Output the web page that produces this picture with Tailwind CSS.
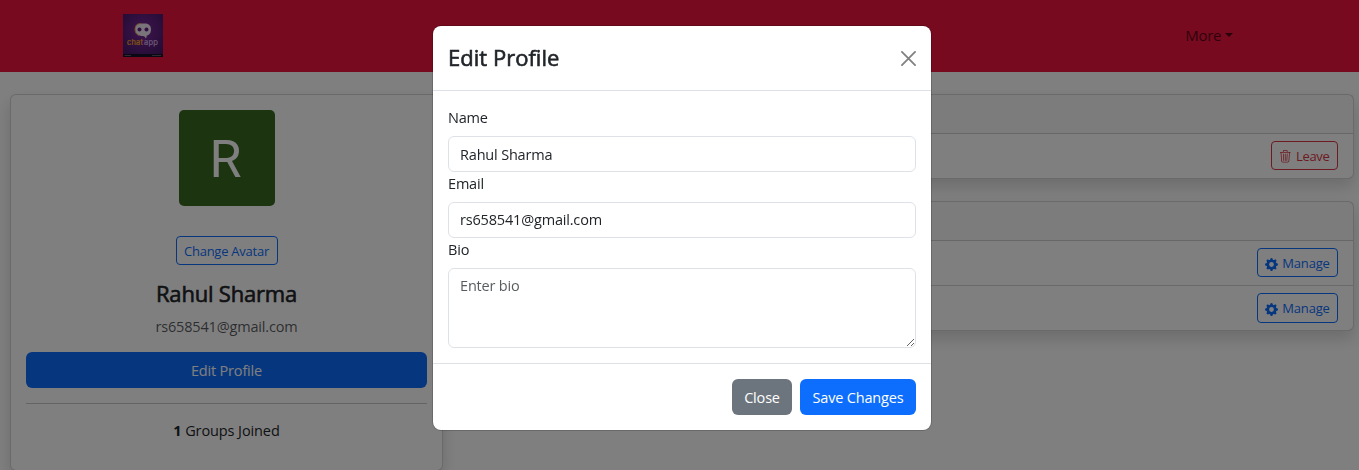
<!DOCTYPE html>
<html lang="en">
<head>
<meta charset="utf-8">
<title>Edit Profile</title>
<script src="https://cdn.jsdelivr.net/npm/@tailwindcss/browser@4"></script>
</head>
<body class="h-[470px] overflow-hidden bg-white font-['Segoe_UI','Open_Sans',sans-serif] text-[14.5px] leading-[22.5px] tracking-[-0.18px] text-[#212529]">
<nav class="flex h-[72px] items-center justify-between bg-[#ee143e] pr-[126px] pl-[123px]">
  <svg class="mt-[-2px] h-[43px] w-[40px]" viewBox="0 0 40 43">
    <defs><radialGradient id="g" cx=".5" cy=".4" r=".7"><stop offset="0" stop-color="#7c2a9c"/><stop offset="1" stop-color="#451766"/></radialGradient></defs>
    <rect width="40" height="43" fill="url(#g)"/>
    <rect y="40" width="40" height="3" fill="#17102c"/>
    <path d="M1.5 41.5H8M29 41.5H38" stroke="#777" stroke-width=".7"/>
    <path d="M18 9.500h4c4 0 6 2.500 6 6s-2 6-4.500 6c.3 1 .2 2-.8 3-.4-1.500-1.200-2.500-2.700-2.500-4.500 0-8-2-8-6.500s2-6 6-6z" fill="#f2e6f5"/>
    <path d="M18 9.500c-4 0-6 2.500-6 6 0 3 1.500 5 4 6" fill="none" stroke="#e49c48"/>
    <circle cx="16.500" cy="15.500" r="2" fill="#641d83"/><circle cx="23.500" cy="15.500" r="2" fill="#641d83"/>
    <text x="4" y="30.500" font-family="Inter, sans-serif" font-size="7.500" letter-spacing="0.2" fill="#ffae20" stroke="#ffae20" stroke-width=".2">chat</text>
    <text x="21" y="30.500" font-family="Inter, sans-serif" font-size="7.500" letter-spacing="0.2" fill="#d8b4ea" stroke="#d8b4ea" stroke-width=".2">app</text>
  </svg>
  <div class="mt-[-2px] flex items-center gap-[4px] text-black/65"><span class="text-[15px] tracking-[-0.35px]">More</span><span class="border-x-[4px] border-t-[4px] border-x-transparent border-t-current"></span></div>
</nav>
<main class="flex items-start gap-[12px] pt-[22px] pl-[10px]">
  <section class="flex h-[377px] w-[433px] shrink-0 flex-col items-center rounded-[6px] border border-black/17 bg-white px-[15px] pt-[15px] shadow-[0_8px_16px_rgba(0,0,0,0.15)]">
    <div class="flex size-[96px] items-center justify-center rounded-[5px] bg-[#386a20] pt-[5px] pr-[2px] font-[Roboto] text-[52px] tracking-normal text-white">R</div>
    <div class="mt-[30px] flex h-[29px] w-[102px] items-center justify-center rounded-[4px] border border-[#0d6efd] pt-[2px] text-[13px] tracking-[-0.25px] whitespace-nowrap text-[#0d6efd]">Change Avatar</div>
    <h4 class="mt-[15px] text-[22px] leading-[27px] tracking-[-0.2px] [-webkit-text-stroke:0.6px]">Rahul Sharma</h4>
    <p class="mt-[9px] text-[#212529]/75">rs658541@gmail.com</p>
    <div class="mt-[13px] flex h-[36px] w-full items-center justify-center rounded-[6px] bg-[#0d6efd] pt-[3px] text-white">Edit Profile</div>
    <hr class="mt-[15px] w-full border-[#212529]/25">
    <p class="mt-[16px] tracking-[-0.1px]"><b>1</b> Groups Joined</p>
  </section>
  <div class="flex w-[899px] shrink-0 flex-col gap-[22px]">
    <section class="h-[85px] rounded-[6px] border border-black/17 bg-white shadow-[0_8px_16px_rgba(0,0,0,0.15)]">
      <div class="h-[39px] border-b border-black/17 bg-[#212529]/3"></div>
      <div class="flex justify-end pt-[7px] pr-[15px]">
        <div class="flex h-[29px] w-[67px] items-center justify-center gap-[4px] rounded-[4px] border border-[#dc3545] pt-[2px] text-[13px] tracking-[-0.3px] text-[#dc3545]">
          <svg class="size-[12.500px]" viewBox="0 0 16 16" fill="currentColor"><path d="M6.500 1h3a.5.5 0 0 1 .5.5v1H6v-1a.5.5 0 0 1 .5-.5M11 2.500v-1A1.500 1.500 0 0 0 9.500 0h-3A1.500 1.500 0 0 0 5 1.500v1H1.500a.5.5 0 0 0 0 1h.538l.853 10.660A2 2 0 0 0 4.885 16h6.230a2 2 0 0 0 1.994-1.840l.853-10.660h.538a.5.5 0 0 0 0-1zm1.958 1-.846 10.580a1 1 0 0 1-.997.920h-6.230a1 1 0 0 1-.997-.920L3.042 3.500zm-7.487 1a.5.5 0 0 1 .528.470l.5 8.500a.5.5 0 0 1-.998.060L5 5.030a.5.5 0 0 1 .470-.530Zm5.058 0a.5.5 0 0 1 .470.530l-.5 8.500a.5.5 0 1 1-.998-.060l.5-8.500a.5.5 0 0 1 .528-.470M8 4.500a.5.5 0 0 1 .5.5v8.500a.5.5 0 0 1-1 0V5a.5.5 0 0 1 .5-.5"/></svg>
          <span>Leave</span>
        </div>
      </div>
    </section>
    <section class="h-[130px] rounded-[6px] border border-black/17 bg-white shadow-[0_8px_16px_rgba(0,0,0,0.15)]">
      <div class="h-[39px] border-b border-black/17 bg-[#212529]/3"></div>
      <div class="flex h-[45px] justify-end border-b border-black/17 pt-[7px] pr-[15px]">
        <div class="flex h-[29px] w-[81px] items-center justify-center gap-[4px] rounded-[4px] border border-[#0d6efd] pt-[2px] text-[13px] text-[#0d6efd]">
          <svg class="mt-px size-[13px]" viewBox="0 0 16 16" fill="currentColor"><path d="M9.405 1.050c-.413-1.400-2.397-1.400-2.810 0l-.1.340a1.464 1.464 0 0 1-2.105.872l-.310-.170c-1.283-.698-2.686.705-1.987 1.987l.169.311c.446.820.023 1.841-.872 2.105l-.340.1c-1.400.413-1.400 2.397 0 2.810l.340.1a1.464 1.464 0 0 1 .872 2.105l-.170.310c-.698 1.283.705 2.686 1.987 1.987l.311-.169a1.464 1.464 0 0 1 2.105.872l.1.340c.413 1.400 2.397 1.400 2.810 0l.1-.340a1.464 1.464 0 0 1 2.105-.872l.310.170c1.283.698 2.686-.705 1.987-1.987l-.169-.311a1.464 1.464 0 0 1 .872-2.105l.340-.1c1.400-.413 1.400-2.397 0-2.810l-.340-.1a1.464 1.464 0 0 1-.872-2.105l.170-.310c.698-1.283-.705-2.686-1.987-1.987l-.311.169a1.464 1.464 0 0 1-2.105-.872zM8 10.930a2.929 2.929 0 1 1 0-5.860 2.929 2.929 0 0 1 0 5.858z"/></svg>
          <span>Manage</span>
        </div>
      </div>
      <div class="flex justify-end pt-[7px] pr-[15px]">
        <div class="flex h-[30px] w-[81px] items-center justify-center gap-[4px] rounded-[4px] border border-[#0d6efd] pt-px text-[13px] text-[#0d6efd]">
          <svg class="mt-px size-[13px]" viewBox="0 0 16 16" fill="currentColor"><path d="M9.405 1.050c-.413-1.400-2.397-1.400-2.810 0l-.1.340a1.464 1.464 0 0 1-2.105.872l-.310-.170c-1.283-.698-2.686.705-1.987 1.987l.169.311c.446.820.023 1.841-.872 2.105l-.340.1c-1.400.413-1.400 2.397 0 2.810l.340.1a1.464 1.464 0 0 1 .872 2.105l-.170.310c-.698 1.283.705 2.686 1.987 1.987l.311-.169a1.464 1.464 0 0 1 2.105.872l.1.340c.413 1.400 2.397 1.400 2.810 0l.1-.340a1.464 1.464 0 0 1 2.105-.872l.310.170c1.283.698 2.686-.705 1.987-1.987l-.169-.311a1.464 1.464 0 0 1 .872-2.105l.340-.1c1.400-.413 1.400-2.397 0-2.810l-.340-.1a1.464 1.464 0 0 1-.872-2.105l.170-.310c.698-1.283-.705-2.686-1.987-1.987l-.311.169a1.464 1.464 0 0 1-2.105-.872zM8 10.930a2.929 2.929 0 1 1 0-5.860 2.929 2.929 0 0 1 0 5.858z"/></svg>
          <span>Manage</span>
        </div>
      </div>
    </section>
  </div>
</main>
<div class="fixed inset-0 flex items-start bg-black/50 pt-[26px] pl-[433px]">
  <div class="h-[404px] w-[498px] rounded-[8px] bg-white shadow-[0_0_0_1px_rgba(0,0,0,0.175)]">
    <header class="flex h-[65px] items-center justify-between border-b border-[#dee2e6] px-[15px]">
      <h5 class="mt-[-2px] text-[22px] leading-[32px] tracking-[0.02px] [-webkit-text-stroke:0.6px]">Edit Profile</h5>
      <svg class="size-[15px]" viewBox="0 0 16 16" fill="none" stroke="#808080" stroke-width="1.900" stroke-linecap="round"><path d="M1 1l14 14M15 1L1 15"/></svg>
    </header>
    <form class="flex h-[272px] flex-col px-[15px] pt-[15px]">
      <label class="h-[30px] pt-px">Name</label>
      <input class="h-[36px] shrink-0 rounded-[6px] border border-[#dee2e6] px-[11px]" value="Rahul Sharma">
      <label class="h-[30px] pt-px">Email</label>
      <input class="h-[36px] shrink-0 rounded-[6px] border border-[#dee2e6] px-[11px] pb-[2px]" value="rs658541@gmail.com">
      <label class="h-[30px] pt-px">Bio</label>
      <textarea class="h-[80px] shrink-0 rounded-[6px] border border-[#dee2e6] px-[11px] pt-[6px] placeholder:text-[#212529]/75" placeholder="Enter bio"></textarea>
    </form>
    <footer class="flex justify-end gap-[8px] border-t border-[#dee2e6] px-[15px] pt-[15px] text-white">
      <button type="button" class="h-[36px] w-[60px] rounded-[6px] bg-[#6c757d] pt-[2px]">Close</button>
      <button type="button" class="h-[36px] w-[116px] rounded-[6px] bg-[#0d6efd] pt-[2px] whitespace-nowrap">Save Changes</button>
    </footer>
  </div>
</div>
</body>
</html>
